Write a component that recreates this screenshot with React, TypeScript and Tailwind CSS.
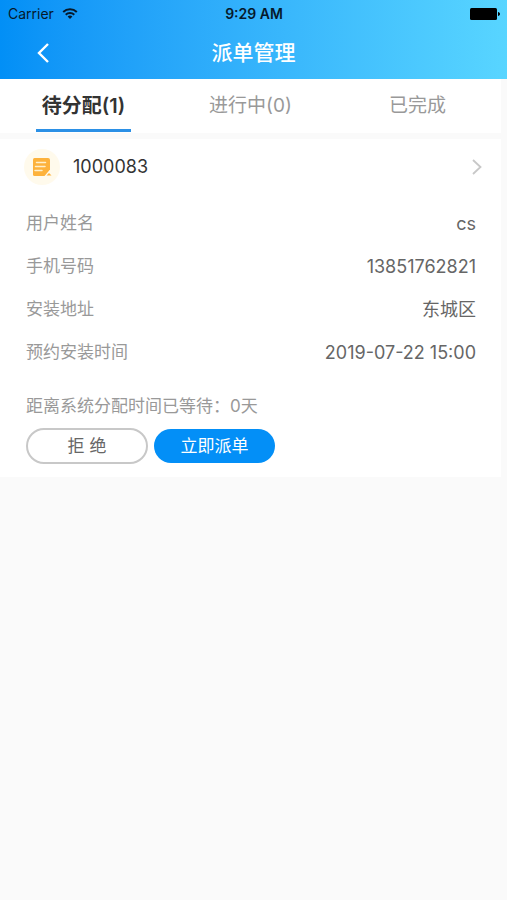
import { clsx } from "clsx";

const tabs = [
  { key: "pending", label: "待分配(1)" },
  { key: "active", label: "进行中(0)" },
  { key: "done", label: "已完成" },
];

const order = {
  id: "1000083",
  waitingDays: 0,
  fields: [
    { label: "用户姓名", value: "cs" },
    { label: "手机号码", value: "13851762821" },
    { label: "安装地址", value: "东城区" },
    { label: "预约安装时间", value: "2019-07-22 15:00" },
  ],
};

const WifiIcon = () => (
  <svg viewBox="0 0 16 12" className="h-3 w-4" fill="none" stroke="#06192b">
    <path d="M1.2 4a9.8 9.8 0 0 1 13.6 0" strokeWidth="2" />
    <path d="M3.7 6.7a6.2 6.2 0 0 1 8.6 0" strokeWidth="1.9" />
    <path d="M8 11 5.6 8.6a3.5 3.5 0 0 1 4.8 0Z" fill="#06192b" stroke="none" />
  </svg>
);

const BatteryIcon = () => (
  <svg viewBox="0 0 30 12" className="h-3 w-[30px]" fill="#000">
    <rect x="0" y="0" width="27" height="12" rx="1.5" />
    <path d="M28 4c1.2.2 2 1 2 2s-.8 1.8-2 2Z" />
  </svg>
);

const BackIcon = () => (
  <svg
    viewBox="0 0 12 20"
    className="h-5 w-3"
    fill="none"
    stroke="#fff"
    strokeWidth="2.4"
  >
    <path d="M11 1 2 10l9 9" />
  </svg>
);

const ForwardIcon = () => (
  <svg
    viewBox="0 0 10 16"
    className="h-4 w-[10px]"
    fill="none"
    stroke="#c8c8c8"
    strokeWidth="1.8"
  >
    <path d="m1 1 7.5 7L1 15" />
  </svg>
);

const OrderIcon = () => (
  <svg viewBox="0 0 36 36" className="h-9 w-9">
    <circle cx="18" cy="18" r="18" fill="#fffaec" />
    <path
      d="M10.5 9H24a2 2 0 0 1 2 2v9.5L20.5 27h-10A1.5 1.5 0 0 1 9 25.5v-15A1.5 1.5 0 0 1 10.5 9Z"
      fill="#fdb23c"
    />
    <path d="M22.5 26.5 25 24l2.500 2.500Z" fill="#fdb23c" />
    <path
      d="M12.5 13.5h9M11.5 17.5H21M11 21.5h7"
      stroke="#fff0cc"
      strokeWidth="1.5"
      strokeLinecap="round"
    />
  </svg>
);

const Header = () => (
  <header className="bg-linear-to-r from-[#028ff6] to-[#58d5ff]">
    <div className="grid h-[27px] grid-cols-3 items-center pr-[7px] pl-2 text-sm text-[#06192b]">
      <div className="flex items-center gap-2">
        <span>Carrier</span>
        <WifiIcon />
      </div>
      <span className="text-center font-semibold">9:29 AM</span>
      <div className="flex justify-end">
        <BatteryIcon />
      </div>
    </div>
    <div className="grid h-[52px] grid-cols-3 items-center">
      <button aria-label="返回" className="ml-[37px] w-fit">
        <BackIcon />
      </button>
      <h1 className="text-center text-[21px] font-medium text-white">
        派单管理
      </h1>
    </div>
  </header>
);

const Tabs = ({ active }: { active: string }) => (
  <nav className="grid h-[54px] grid-cols-3 bg-white">
    {tabs.map((tab) => (
      <button
        key={tab.key}
        className="flex justify-center text-[19px] text-[#999]"
      >
        <span
          className={clsx(
            "flex h-[53px] items-center border-b-3 px-1.5 pt-1",
            tab.key === active
              ? "border-[#2b90e6] text-xl font-semibold text-[#333]"
              : "border-transparent"
          )}
        >
          {tab.label}
        </span>
      </button>
    ))}
  </nav>
);

const OrderCard = () => (
  <section className="bg-white pr-[25px] pb-[13px] pl-[26px]">
    <a href="#order" className="-ml-0.5 flex h-14 items-center">
      <OrderIcon />
      <span className="ml-[13px] flex-1 text-lg text-[#333]">{order.id}</span>
      <span className="-mr-1.5">
        <ForwardIcon />
      </span>
    </a>
    <dl className="flex flex-col pt-[7px]">
      {order.fields.map((field) => (
        <div
          key={field.label}
          className="flex h-[43px] items-center justify-between"
        >
          <dt className="text-[17px] text-[#999]">{field.label}</dt>
          <dd className="text-lg text-[#666]">{field.value}</dd>
        </div>
      ))}
    </dl>
    <p className="pt-3.5 pb-1 text-[17px] leading-9 text-[#999]">
      距离系统分配时间已等待：{order.waitingDays}天
    </p>
    <div className="flex items-center gap-1.5">
      <button className="h-9 w-[122px] rounded-full border-2 border-[#c8c8c8] pt-0.5 text-[17px] text-[#666]">
        拒 绝
      </button>
      <button className="h-[34px] w-[121px] rounded-full bg-[#038ff7] pt-0.5 text-[17px] text-white">
        立即派单
      </button>
    </div>
  </section>
);

export default function App() {
  return (
    <div className="min-h-screen bg-[#fafafa] font-['Inter','Noto_Sans_CJK_SC',sans-serif]">
      <Header />
      <main className="flex flex-col gap-1.5 pr-1.5">
        <Tabs active="pending" />
        <OrderCard />
      </main>
    </div>
  );
}
